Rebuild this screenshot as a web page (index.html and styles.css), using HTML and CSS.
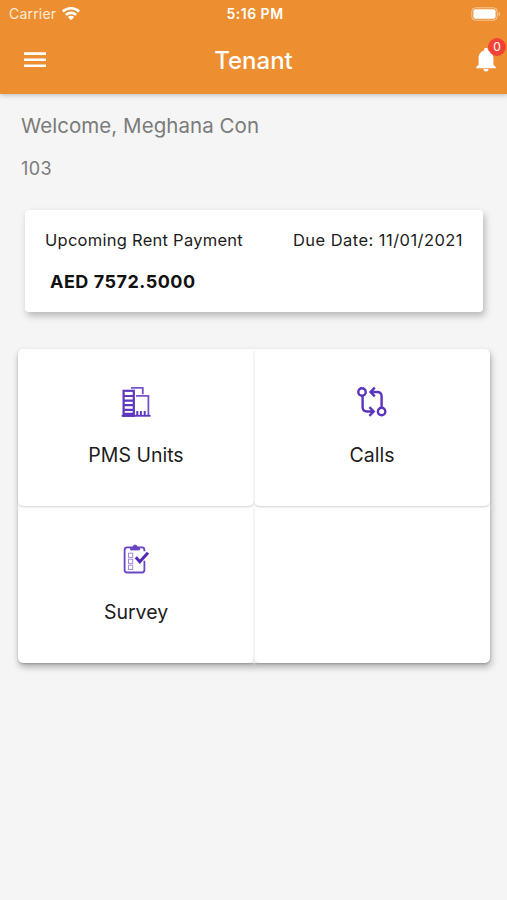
FILE: index.html
```html
<!DOCTYPE html>
<html lang="en">
<head>
<meta charset="UTF-8" />
<meta name="viewport" content="width=device-width, initial-scale=1" />
<title>Tenant</title>
<link rel="stylesheet" href="styles.css">
</head>
<body>

<header class="header">
  <div class="status-bar">
    <div class="carrier">
      <span>Carrier</span>
      <svg width="20" height="15" viewBox="0 0 20 15">
        <g fill="none" stroke="#fff" stroke-width="2.6">
          <path d="M1.8 5.5a11.8 11.8 0 0 1 16.4 0" />
          <path d="M4.9 8.9a7.4 7.4 0 0 1 10.2 0" />
        </g>
        <path d="M10 14.2l-3.1-3.2a4.4 4.4 0 0 1 6.2 0z" fill="#fff" />
      </svg>
    </div>
    <span class="time">5:16 PM</span>
    <svg class="battery" width="30" height="14" viewBox="0 0 30 14">
      <rect x="0.8" y="0.8" width="25.4" height="12.4" rx="3.6" fill="none" stroke="#fff" stroke-opacity="0.5" />
      <rect x="2.4" y="2.2" width="22.2" height="9.6" rx="2" fill="#fff" />
      <path d="M27.6 5v4.2q1.6-.7 1.6-2.1T27.6 5z" fill="#fff" fill-opacity="0.5" />
    </svg>
  </div>
  <div class="app-bar">
    <button class="icon-btn" aria-label="Menu">
      <svg width="24" height="16" viewBox="0 0 24 16">
        <path d="M1 1.6h22M1 7.7h22M1 13.8h22" stroke="#fff" stroke-width="2.6" />
      </svg>
    </button>
    <h1>Tenant</h1>
    <button class="icon-btn bell" aria-label="Notifications">
      <svg width="20" height="25" viewBox="0 0 20 25">
        <path d="M10 24.6a2.5 2.5 0 0 0 2.5-2.5h-5A2.5 2.5 0 0 0 10 24.6zM17.4 17.7v-6.4c0-3.8-2-7-5.5-7.9V2.6a1.9 1.9 0 0 0-3.8 0v.8c-3.5.9-5.5 4.1-5.5 7.9v6.4L.2 20v1.2h19.6V20z" fill="#fff" />
      </svg>
      <span class="badge">0</span>
    </button>
  </div>
</header>

<main>
  <p class="welcome">Welcome, Meghana Con</p>
  <p class="unit">103</p>

  <section class="payment">
    <div class="payment-row">
      <span class="payment-label">Upcoming Rent Payment</span>
      <span class="due">Due Date: 11/01/2021</span>
    </div>
    <div class="amount">AED 7572.5000</div>
  </section>

  <section class="menu">
    <div class="tile">
      <svg width="32" height="32" viewBox="0 0 32 32" fill="none" stroke="#5f38bd">
        <path d="M11 2.8h11.8v6.4" stroke-width="1.8" stroke="#7655c8" />
        <path d="M16 10.8h12.4V31" stroke-width="1.8" stroke="#7655c8" />
        <rect x="3.6" y="5.8" width="10.2" height="25" stroke-width="2.2" />
        <path d="M3.6 11h10.2M3.6 15.6h10.2M3.6 20.2h10.2M3.6 24.8h10.2M3.6 28.8h10.2" stroke-width="2.2" />
        <path d="M17.3 26V31M20.9 26V31M24.7 26V31" stroke-width="2" />
        <path d="M1.6 30.8h29" stroke-width="1.8" />
      </svg>
      <span>PMS Units</span>
    </div>
    <div class="tile">
      <svg width="32" height="32" viewBox="0 0 32 32" fill="none" stroke="#5a34bd" stroke-width="2.4">
        <circle cx="6" cy="7" r="3.7" />
        <circle cx="25.6" cy="26.5" r="3.7" />
        <path d="M6.6 10.7V22q0 4.5 4.5 4.5h6.2M13.4 22.2l4.3 4.3-4.3 4.3" />
        <path d="M25.6 22.8V11.5q0-4.5-4.5-4.5h-6.2M18.8 2.7L14.5 7l4.3 4.3" />
      </svg>
      <span>Calls</span>
    </div>
    <div class="tile">
      <svg width="32" height="32" viewBox="0 0 32 32" fill="none" stroke="#6a45c3">
        <path d="M24.4 18.7V28q0 2.5-2.5 2.5H7.1q-2.5 0-2.5-2.5V7.9q0-2.5 2.5-2.5h14.8q2.5 0 2.5 2.5v1.3" stroke-width="1.8" />
        <path d="M10.6 7.9V6h2.2q.2-3 2.3-3t2.3 3h2.2v1.9z" fill="#6a45c3" />
        <g stroke="#a28ad9">
          <rect x="8.5" y="11.2" width="4.2" height="4.2" />
          <rect x="8.5" y="17.2" width="4.2" height="4.2" />
          <rect x="8.5" y="23.2" width="4.2" height="4.2" />
        </g>
        <path d="M15.8 15.3l4 4.4 8.2-8.9" stroke="#5429b5" stroke-width="3" />
      </svg>
      <span>Survey</span>
    </div>
    <div class="tile"></div>
  </section>
</main>

</body>
</html>
```

FILE: styles.css
```css
* {
  box-sizing: border-box;
}
body {
  margin: 0;
  min-height: 900px;
  background: #f5f5f5;
  font-family: Inter, "Liberation Sans", sans-serif;
  color: #1c1c1c;
}
h1, p {
  margin: 0;
}
.header {
  height: 94px;
  background: #ed8f31;
  color: #fff;
  box-shadow: 0 1px 5px rgba(0,0,0,0.25);
}
.status-bar {
  display: grid;
  grid-template-columns: 1fr auto 1fr;
  align-items: center;
  height: 27px;
  padding: 0 6px 0 9px;
  font-size: 14px;
}
.carrier {
  display: flex;
  align-items: center;
  gap: 5px;
  color: #fdebd8;
  letter-spacing: 0.2px;
}
.time {
  font-size: 14px;
  font-weight: 600;
  letter-spacing: 0.5px;
}
.battery {
  justify-self: end;
}
.app-bar {
  display: grid;
  grid-template-columns: 1fr auto 1fr;
  align-items: center;
  height: 66px;
  padding: 0 11px 0 23px;
}
h1 {
  margin-right: 12px;
  font-size: 24px;
  font-weight: 500;
}
.icon-btn {
  display: flex;
  padding: 0;
  border: none;
  background: none;
}
.bell {
  position: relative;
  justify-self: end;
  margin-bottom: 2px;
}
.badge {
  position: absolute;
  top: -9px;
  right: -10px;
  width: 18px;
  height: 18px;
  border-radius: 50%;
  background: #f44336;
  color: #fff;
  font: 12px/18px Inter, "Liberation Sans", sans-serif;
  text-align: center;
}
main {
  padding: 20px 17px 0 18px;
}
.welcome, .unit {
  padding-left: 3px;
  color: #7b7b7b;
}
.welcome {
  font-size: 20.5px;
  line-height: 24px;
  letter-spacing: 0.05px;
}
.unit {
  margin-top: 20px;
  font-size: 18px;
  line-height: 22px;
  letter-spacing: 0.4px;
}
.payment {
  height: 102px;
  margin: 30px 7px 37px;
  padding: 20px 20px 0;
  background: #fff;
  border-radius: 4px;
  box-shadow: 2px 4px 7px rgba(0,0,0,0.25);
}
.payment-row {
  display: flex;
  justify-content: space-between;
  font-size: 16.5px;
  line-height: 21px;
  letter-spacing: 0.26px;
}
.due {
  letter-spacing: 0.45px;
}
.amount {
  margin: 20px 0 0 5px;
  font-size: 18px;
  font-weight: 700;
  line-height: 22px;
  letter-spacing: 0.5px;
  color: #111;
}
.menu {
  display: grid;
  grid-template-columns: 1fr 1fr;
  grid-auto-rows: 157px;
  border-radius: 5px;
  background: #fff;
  box-shadow: 1px 4px 7px rgba(0,0,0,0.3);
}
.tile {
  display: flex;
  flex-direction: column;
  align-items: center;
  padding-top: 36px;
  border-radius: 5px;
  box-shadow: 0 1px 2px rgba(0,0,0,0.18);
  font-size: 19.5px;
  line-height: 24px;
}
.tile span {
  margin-top: 26px;
}
```
